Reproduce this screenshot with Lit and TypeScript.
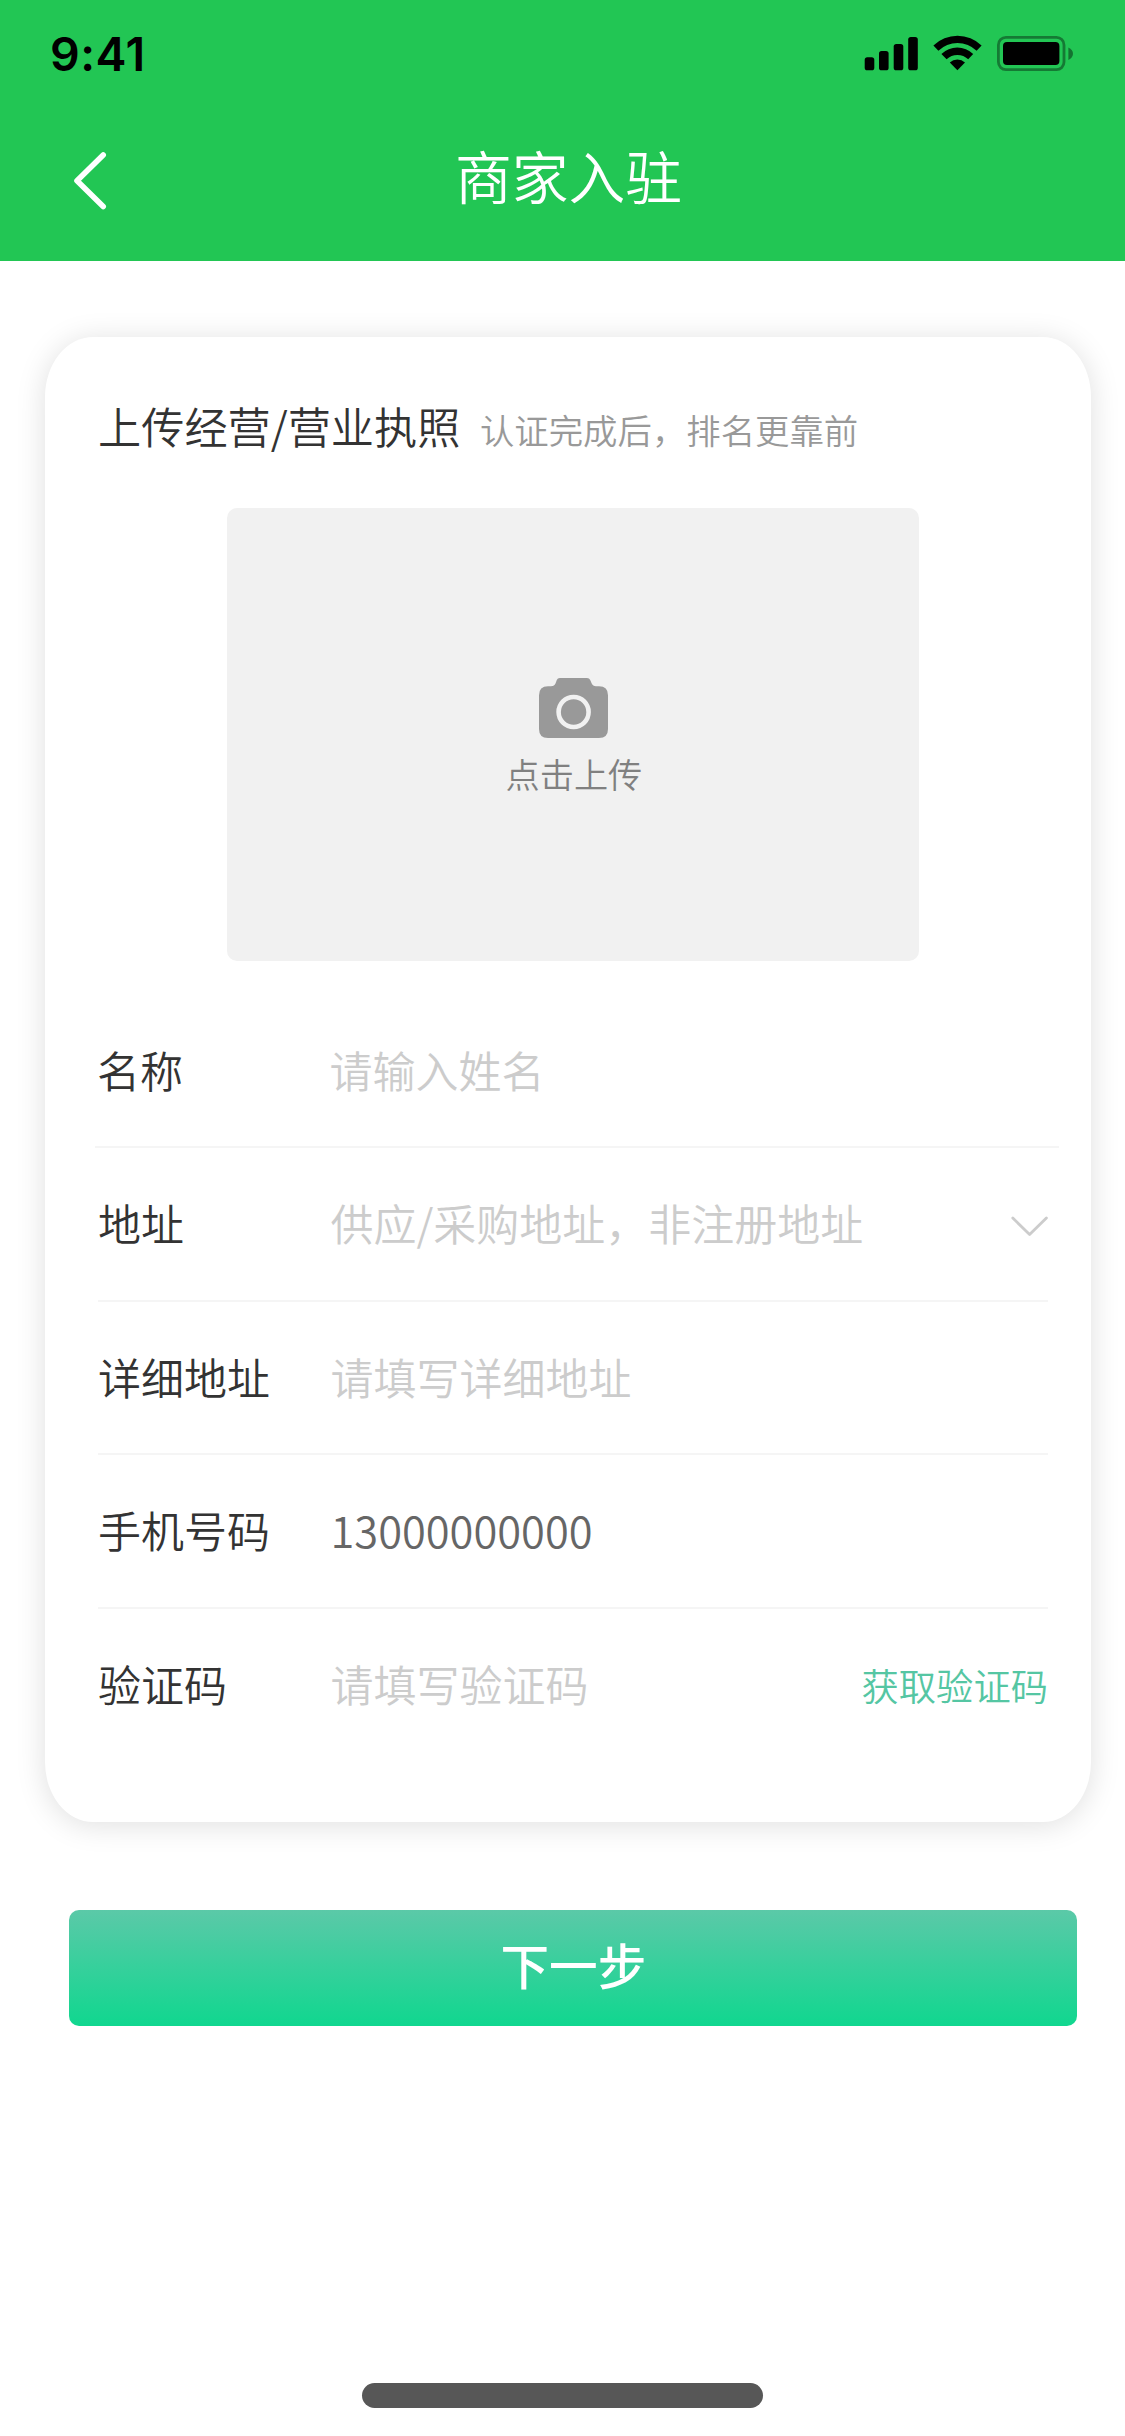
import { LitElement, html, css, svg, nothing } from "lit";
import { customElement, property, state } from "lit/decorators.js";
import { classMap } from "lit/directives/class-map.js";

interface Field {
  label: string;
  text: string;
  filled?: boolean;
  trailing?: "chevron" | "code";
}

@customElement("status-bar")
class StatusBar extends LitElement {
  static styles = css`
    :host { display: block; }
    .bar {
      display: flex;
      align-items: flex-start;
      justify-content: space-between;
      height: 108px;
      padding: 0 50px 0 50px;
      box-sizing: border-box;
    }
    .time {
      padding-top: 24px;
      font: 600 46.5px/60px Inter, sans-serif;
      letter-spacing: 0.5px;
      color: #000;
    }
    .icons { display: block; margin-top: 32px; }
  `;

  render() {
    return html`
      <div class="bar">
        <div class="time">9:41</div>
        <svg class="icons" width="211" height="44" viewBox="864 32 211 44">
          ${[[864.7, 57.3], [879, 51], [893.7, 44], [908.2, 37]].map(
            ([x, y]) => svg`<rect x=${x} y=${y} width="9.6" height=${70.3 - y} rx="2.6"></rect>`
          )}
          <path d="M933.4 45.6 A34.5 34.5 0 0 1 981.6 45.6 L976.6 50.8 A27.4 27.4 0 0 0 938.4 50.8 Z"></path>
          <path d="M941.4 53.9 A23 23 0 0 1 973.2 53.9 L968.2 59.3 A15.8 15.8 0 0 0 946.6 59.3 Z"></path>
          <path d="M949.8 62.4 A11.4 11.4 0 0 1 965 62.4 L957.4 70.3 Z"></path>
          <rect x="998.4" y="37.4" width="65.6" height="32.2" rx="7.5" fill="none" stroke="#000" stroke-opacity=".38" stroke-width="2.8"></rect>
          <rect x="1003" y="42" width="56.4" height="23" rx="4"></rect>
          <path d="M1068.4 47.6 Q1073 50 1073 53.7 Q1073 57.6 1068.4 60 Z" fill-opacity=".42"></path>
        </svg>
      </div>
    `;
  }
}

@customElement("nav-header")
class NavHeader extends LitElement {
  @property() heading = "";

  static styles = css`
    :host { display: block; }
    .nav {
      display: grid;
      grid-template-columns: 1fr auto 1fr;
      align-items: center;
      height: 153px;
      padding: 0 60px 0 72px;
      box-sizing: border-box;
    }
    .back { display: block; margin-top: -8px; }
    .title {
      font: 350 56.8px/80px "Noto Sans CJK SC", sans-serif;
      color: #fff;
      margin: -22px 0 0;
    }
  `;

  render() {
    return html`
      <div class="nav">
        <svg class="back" width="36" height="60" viewBox="72 151 36 60" fill="none" stroke="#fff" stroke-width="5.6" stroke-linecap="round" stroke-linejoin="round">
          <path d="M103.2 155 L77 180.8 L103.2 206.6"></path>
        </svg>
        <h1 class="title">${this.heading}</h1>
      </div>
    `;
  }
}

@customElement("upload-box")
class UploadBox extends LitElement {
  static styles = css`
    :host { display: block; }
    .box {
      display: flex;
      flex-direction: column;
      align-items: center;
      width: 692px;
      height: 453.5px;
      padding-top: 170px;
      box-sizing: border-box;
      border-radius: 10px;
      background: #f1f1f1;
    }
    .camera { display: block; }
    .caption {
      margin-top: 10.5px;
      padding-left: 1px;
      font: 350 34.2px/50px "Noto Sans CJK SC", sans-serif;
      color: #808080;
    }
  `;

  render() {
    return html`
      <div class="box">
        <svg class="camera" width="69" height="60" viewBox="539 677 69 60">
          <path fill="#999" d="M548 685.3 H551 Q554.5 685.3 555.6 682.3 L556.8 679 Q557.6 677 559.8 677 H587 Q589.4 677 590.2 679 L591.6 682.3 Q592.8 685.3 596 685.3 H599 Q608 685.3 608 694.3 V728 Q608 737 599 737 H548 Q539 737 539 728 V694.3 Q539 685.3 548 685.3 Z"></path>
          <circle cx="573.6" cy="711" r="15" fill="none" stroke="#f1f1f1" stroke-width="4.6"></circle>
        </svg>
        <div class="caption">点击上传</div>
      </div>
    `;
  }
}

@customElement("form-row")
class FormRow extends LitElement {
  @property({ attribute: false }) field!: Field;
  @property({ type: Boolean }) wide = false;
  @property({ type: Boolean }) last = false;

  static styles = css`
    :host { display: block; }
    .row {
      display: flex;
      align-items: center;
      height: 153.6px;
      margin: 0 43px 0 53px;
      padding-bottom: 3.4px;
      box-sizing: border-box;
      border-bottom: 2px solid #f5f5f5;
      font: 350 43px/60px "Noto Sans CJK SC", sans-serif;
    }
    .wide { margin: 0 32px 0 50px; padding-left: 2px; padding-right: 11px; }
    .last { border-bottom-color: transparent; }
    .label { width: 232.5px; color: #333; }
    .value { flex: 1; color: #ccc; white-space: nowrap; }
    .filled { color: #666; font-size: 43.4px; }
    .chevron { display: block; margin-top: 7px; }
    .code { font-size: 37.3px; color: #55c6a3; padding-top: 5px; }
  `;

  render() {
    const f = this.field;
    return html`
      <div class=${classMap({ row: true, wide: this.wide, last: this.last })}>
        <div class="label">${f.label}</div>
        <div class=${classMap({ value: true, filled: !!f.filled })}>${f.text}</div>
        ${f.trailing === "chevron"
          ? html`<svg class="chevron" width="37" height="22" viewBox="1012 1215 37 22" fill="none" stroke="#ccc" stroke-width="2.8" stroke-linecap="round" stroke-linejoin="round">
              <path d="M1013.8 1218 L1030.6 1234.6 L1047.4 1218"></path>
            </svg>`
          : nothing}
        ${f.trailing === "code" ? html`<div class="code">获取验证码</div>` : nothing}
      </div>
    `;
  }
}

@customElement("app-root")
class AppRoot extends LitElement {
  @state() private fields: Field[] = [
    { label: "名称", text: "请输入姓名" },
    { label: "地址", text: "供应/采购地址，非注册地址", trailing: "chevron" },
    { label: "详细地址", text: "请填写详细地址" },
    { label: "手机号码", text: "13000000000", filled: true },
    { label: "验证码", text: "请填写验证码", trailing: "code" },
  ];

  static styles = css`
    :host { display: block; }
    .page {
      display: flex;
      flex-direction: column;
      width: 1125px;
      height: 2436px;
      background: #fff;
      overflow: hidden;
      font-family: "Noto Sans CJK SC", sans-serif;
      font-weight: 350;
    }
    .top { background: #22c654; height: 261px; flex: none; }
    .card {
      flex: none;
      width: 1046px;
      height: 1485px;
      margin: 76px 0 0 45px;
      box-sizing: border-box;
      border-radius: 48px / 60px;
      background: #fff;
      box-shadow: 0 3px 30px rgba(0, 0, 0, 0.13);
    }
    .heading {
      display: flex;
      align-items: baseline;
      height: 170.5px;
      padding: 58px 0 0 53px;
      box-sizing: border-box;
      white-space: nowrap;
    }
    .name { font-size: 43.2px; line-height: 60px; color: #333; }
    .hint { margin-left: 19.5px; font-size: 34.4px; line-height: 60px; color: #999; }
    .upload { margin-left: 182.4px; }
    .rows { margin-top: 33.5px; }
    .next {
      flex: none;
      display: flex;
      justify-content: center;
      width: 1008px;
      height: 115.5px;
      margin: 88.3px 0 0 69.4px;
      padding: 19px 0 0;
      border: 0;
      border-radius: 10px;
      background: linear-gradient(#5bc9a8, #10d78f);
      color: #fff;
      font: 500 48.6px/70px "Noto Sans CJK SC", sans-serif;
    }
    .home {
      width: 401px;
      height: 25px;
      margin: auto auto 28px 362px;
      border-radius: 13px;
      background: #575757;
    }
  `;

  render() {
    return html`
      <div class="page">
        <header class="top">
          <status-bar></status-bar>
          <nav-header heading="商家入驻"></nav-header>
        </header>
        <main class="card">
          <div class="heading">
            <span class="name">上传经营/营业执照</span>
            <span class="hint">认证完成后，排名更靠前</span>
          </div>
          <upload-box class="upload"></upload-box>
          <div class="rows">
            ${this.fields.map(
              (f, i) => html`<form-row .field=${f} ?wide=${i === 0} ?last=${i === this.fields.length - 1}></form-row>`
            )}
          </div>
        </main>
        <button class="next">下一步</button>
        <div class="home"></div>
      </div>
    `;
  }
}
